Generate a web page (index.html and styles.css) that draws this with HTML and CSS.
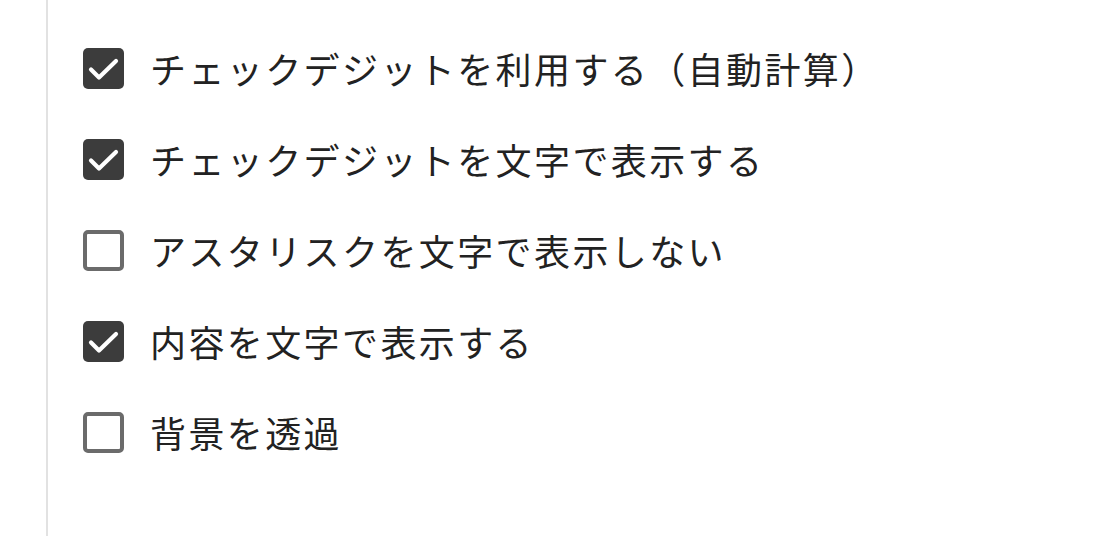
FILE: index.html
```html
<!DOCTYPE html>
<html lang="ja">
<head>
<meta charset="utf-8">
<link rel="stylesheet" href="styles.css">
</head>
<body>
<div class="panel">
  <ul class="options">
    <li class="option">
      <span class="box checked"><svg viewBox="0 0 41 41"><path d="M8 21.5 L16 29.5 L33 13"/></svg></span>
      <span class="label">チェックデジットを利用する（自動計算）</span>
    </li>
    <li class="option">
      <span class="box checked"><svg viewBox="0 0 41 41"><path d="M8 21.5 L16 29.5 L33 13"/></svg></span>
      <span class="label">チェックデジットを文字で表示する</span>
    </li>
    <li class="option">
      <span class="box"></span>
      <span class="label">アスタリスクを文字で表示しない</span>
    </li>
    <li class="option">
      <span class="box checked"><svg viewBox="0 0 41 41"><path d="M8 21.5 L16 29.5 L33 13"/></svg></span>
      <span class="label">内容を文字で表示する</span>
    </li>
    <li class="option">
      <span class="box"></span>
      <span class="label">背景を透過</span>
    </li>
  </ul>
</div>
</body>
</html>
```
FILE: styles.css
```css
html, body {
  margin: 0;
  padding: 0;
  background: #ffffff;
}
body {
  font-family: "Noto Sans CJK JP", "Noto Sans", sans-serif;
  color: #222222;
}
.panel {
  margin-left: 46px;
  border-left: 2px solid #e2e2e2;
  height: 536px;
  box-sizing: border-box;
  padding-top: 48px;
}
.options {
  list-style: none;
  margin: 0;
  padding: 0 0 0 35px;
  display: flex;
  flex-direction: column;
  gap: 50px;
}
.option {
  display: flex;
  align-items: center;
  gap: 26px;
  height: 41px;
}
.box {
  flex: none;
  width: 41px;
  height: 41px;
  box-sizing: border-box;
  border: 4px solid #6b6b6b;
  border-radius: 5px;
  background: #ffffff;
}
.box.checked {
  border: none;
  background: #3c3c3c;
}
.box svg {
  display: block;
  width: 41px;
  height: 41px;
}
.box svg path {
  fill: none;
  stroke: #ffffff;
  stroke-width: 4.2;
  stroke-linecap: round;
  stroke-linejoin: round;
}
.label {
  font-size: 36px;
  line-height: 41px;
  letter-spacing: 2.4px;
  white-space: nowrap;
}
```
